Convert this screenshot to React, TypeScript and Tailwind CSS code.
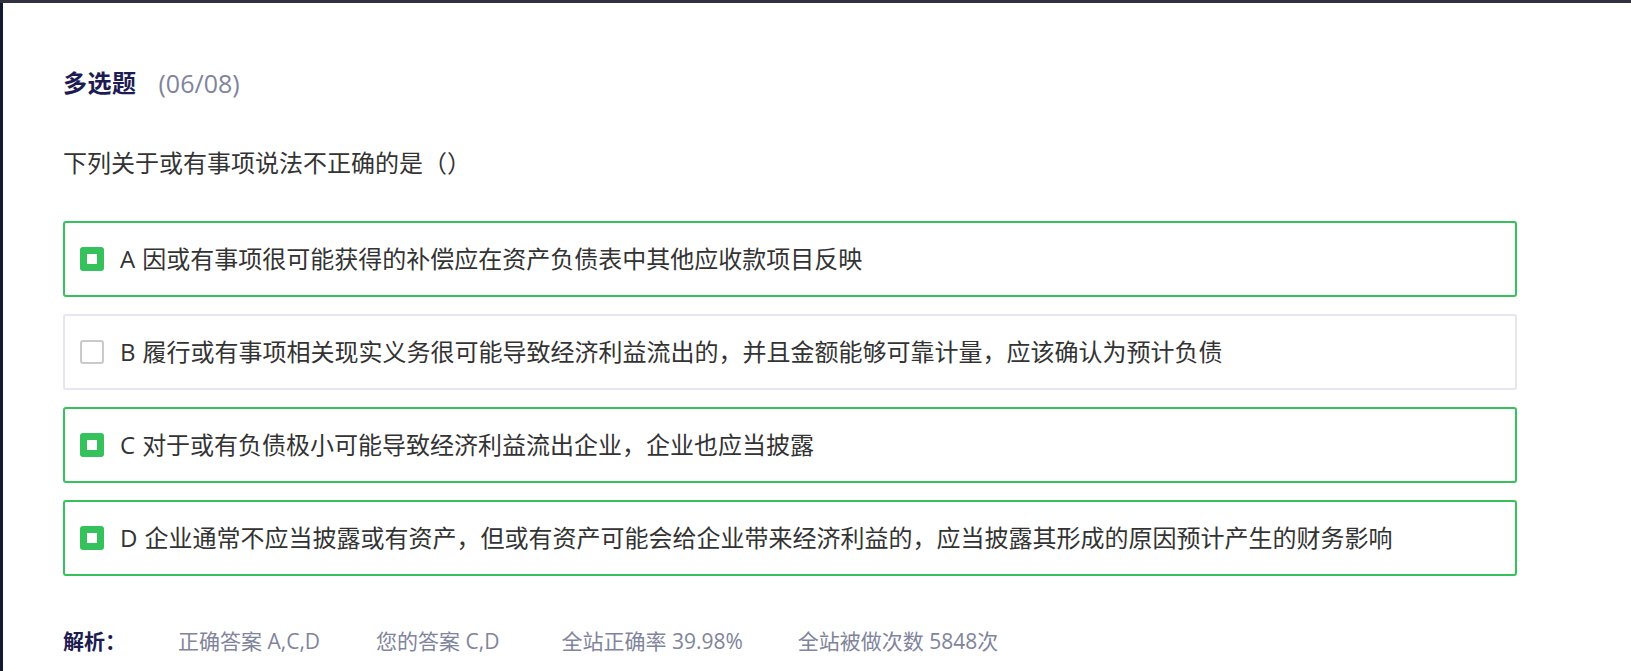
const options = [
  { key: "A", text: "因或有事项很可能获得的补偿应在资产负债表中其他应收款项目反映", checked: true },
  { key: "B", text: "履行或有事项相关现实义务很可能导致经济利益流出的，并且金额能够可靠计量，应该确认为预计负债", checked: false },
  { key: "C", text: "对于或有负债极小可能导致经济利益流出企业，企业也应当披露", checked: true },
  { key: "D", text: "企业通常不应当披露或有资产，但或有资产可能会给企业带来经济利益的，应当披露其形成的原因预计产生的财务影响", checked: true },
];

// margins tuned per item to match the reference spacing
const stats = [
  { text: "正确答案 A,C,D", ml: "ml-[52px]" },
  { text: "您的答案 C,D", ml: "ml-[56px]" },
  { text: "全站正确率 39.98%", ml: "ml-[62px]" },
  { text: "全站被做次数 5848次", ml: "ml-[55px]" },
];

const Checkbox = ({ checked }: { checked: boolean }) =>
  checked ? (
    <span className="flex h-[24px] w-[24px] shrink-0 items-center justify-center rounded-[3px] bg-[#35c25c]">
      <span className="block h-[10px] w-[10px] bg-white" />
    </span>
  ) : (
    <span className="block h-[24px] w-[24px] shrink-0 rounded-[3px] border-2 border-[#cacaca] bg-white" />
  );

export default function App() {
  return (
    <div className="flex min-h-[671px] w-full flex-col bg-white font-['Open_Sans','Noto_Sans_CJK_SC',sans-serif]">
      <div className="h-[3px] w-full bg-[#30323f]" />
      <div className="flex flex-1">
        <div className="w-[3px] shrink-0 bg-[#111a2f]" />
        <main className="flex-1 pl-[60px] pt-[68px]">
          <h1 className="flex items-center text-[24px] leading-[24px]">
            <span className="font-bold tracking-[0.5px] text-[#1d1c52]">多选题</span>
            <span className="ml-[22px] text-[25px] text-[#80849c]">(06/08)</span>
          </h1>

          <p className="mt-[56px] text-[24px] leading-[24px] text-[#333333]">下列关于或有事项说法不正确的是（）</p>

          <div className="mt-[46px] flex w-[1454px] flex-col gap-[17px]">
            {options.map((o) => (
              <div
                key={o.key}
                className={`flex h-[76px] items-center rounded-[3px] border-2 pl-[15px] ${
                  o.checked ? "border-[#35c25c]" : "border-[#e4e7f1]"
                }`}
              >
                <Checkbox checked={o.checked} />
                <span className="ml-[16px] text-[24px] leading-[24px] text-[#333333]">
                  {o.key}
                  <span className="ml-[7px]">{o.text}</span>
                </span>
              </div>
            ))}
          </div>

          <div className="mt-[55px] flex items-center text-[21px] leading-[21px]">
            <span className="w-[63px] font-bold text-[#1d1c52]">解析：</span>
            {stats.map((s) => (
              <span key={s.text} className={`${s.ml} text-[#80849c]`}>
                {s.text}
              </span>
            ))}
          </div>
        </main>
      </div>
    </div>
  );
}
